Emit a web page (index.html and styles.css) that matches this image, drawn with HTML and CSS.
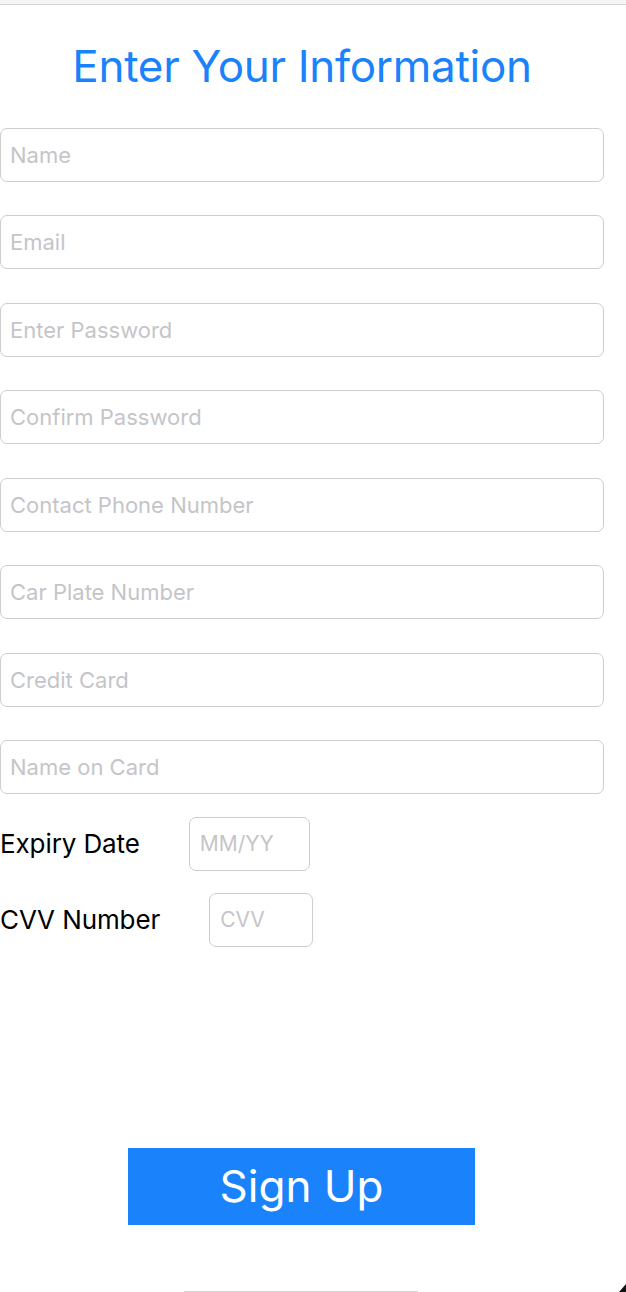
FILE: index.html
```html
<!DOCTYPE html>
<html>
<head>
<meta charset="utf-8">
<link rel="stylesheet" href="styles.css">
</head>
<body>
<div class="topbar"></div>
<main class="screen">
  <h1 class="title">Enter Your Information</h1>
  <form class="form">
    <div class="fields">
      <input class="field" placeholder="Name">
      <input class="field" placeholder="Email">
      <input class="field" placeholder="Enter Password">
      <input class="field" placeholder="Confirm Password">
      <input class="field" placeholder="Contact Phone Number">
      <input class="field" placeholder="Car Plate Number">
      <input class="field" placeholder="Credit Card">
      <input class="field" placeholder="Name on Card">
    </div>
    <div class="row row-expiry">
      <span class="label">Expiry Date</span>
      <input class="small expiry" placeholder="MM/YY">
    </div>
    <div class="row row-cvv">
      <span class="label">CVV Number</span>
      <input class="small cvv" placeholder="CVV">
    </div>
    <div class="actions">
      <button type="button" class="signup">Sign Up</button>
    </div>
  </form>
  <div class="home"></div>
  <div class="corner"></div>
</main>
</body>
</html>
```
FILE: styles.css
```css
html, body {
  margin: 0;
  padding: 0;
  background: #ffffff;
  font-family: Inter, "Noto Sans", sans-serif;
}
.topbar {
  height: 4px;
  background: #f5f5f5;
  border-bottom: 1px solid #d4d4d4;
}
.screen {
  position: relative;
  width: 626px;
  height: 1287px;
}
.title {
  margin: 0;
  padding-top: 34px;
  width: 604px;
  text-align: center;
  font-size: 44px;
  font-weight: 400;
  line-height: 54px;
  color: #1a82fb;
  letter-spacing: -0.3px;
}
.form {
  margin: 0;
  display: flex;
  flex-direction: column;
}
.fields {
  margin-top: 34.5px;
  display: flex;
  flex-direction: column;
  gap: 33.5px;
}
.field, .small {
  box-sizing: border-box;
  height: 54px;
  border: 1.5px solid #cdcdcd;
  border-radius: 7px;
  background: #fff;
  font-family: Inter, "Noto Sans", sans-serif;
  font-size: 22px;
  color: #000;
  outline: none;
  margin: 0;
}
.field {
  width: 604px;
  padding: 0 0 0 9px;
}
.field::placeholder, .small::placeholder {
  color: #c5c5c9;
}
.row {
  display: flex;
  align-items: center;
}
.row-expiry {
  margin-top: 22.5px;
}
.row-cvv {
  margin-top: 22px;
}
.label {
  font-size: 26px;
  color: #000;
  letter-spacing: -0.1px;
}
.small {
  padding: 0 0 0 10px;
  font-size: 21px;
}
.expiry {
  width: 121px;
  margin-left: 49px;
}
.cvv {
  width: 104px;
  margin-left: 49px;
}
.actions {
  margin-top: 201px;
  display: flex;
  padding-left: 128px;
}
.signup {
  width: 347px;
  height: 77px;
  border: none;
  border-radius: 0;
  background: #1a82fb;
  color: #fff;
  font-family: Inter, "Noto Sans", sans-serif;
  font-size: 44px;
  font-weight: 400;
  padding: 0;
}
.home {
  position: absolute;
  left: 184px;
  bottom: 0;
  width: 234px;
  height: 1px;
  background: #d6d6d6;
}
.corner {
  position: absolute;
  right: 0;
  bottom: 0;
  width: 0;
  height: 0;
  border-left: 7px solid transparent;
  border-bottom: 8px solid #111;
}
```
